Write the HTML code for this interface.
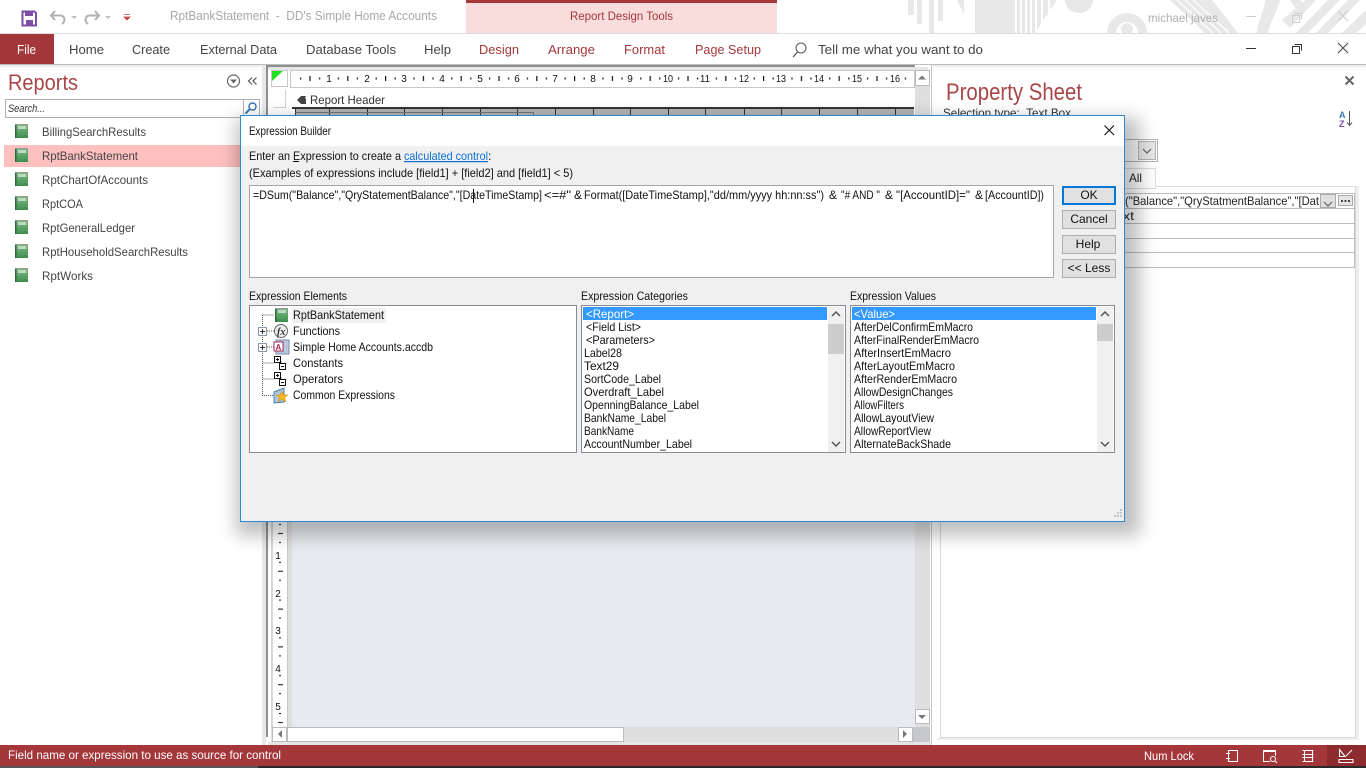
<!DOCTYPE html>
<html><head><meta charset="utf-8"><title>Expression Builder</title>
<style>
html,body{margin:0;padding:0;background:#fff;width:1366px;height:768px;overflow:hidden}
svg{display:block}
text{font-family:"Liberation Sans",sans-serif;white-space:pre}
.s11{font-size:12px;fill:#111}
.nav{font-size:12px;fill:#444}
.rib{font-size:13px;fill:#444}
.red{font-size:13px;fill:#a4373a}
.rul{font-size:10px;fill:#111}
</style></head><body>
<svg width="1366" height="768" viewBox="0 0 1366 768" xmlns="http://www.w3.org/2000/svg">
<defs>
<filter id="bl" x="-20%" y="-20%" width="140%" height="140%"><feGaussianBlur stdDeviation="9"/></filter>
<clipPath id="top"><rect x="900" y="0" width="466" height="33"/></clipPath>
<linearGradient id="gr" x1="0" y1="0" x2="0" y2="1"><stop offset="0" stop-color="#7fbd86"/><stop offset="1" stop-color="#3f8c4f"/></linearGradient>
<pattern id="rh" x="291" y="70" width="37.8" height="17" patternUnits="userSpaceOnUse"><rect x="9" y="7.5" width="1.2" height="2" fill="#111"/><rect x="18.4" y="6" width="1.2" height="5" fill="#111"/><rect x="28" y="7.5" width="1.2" height="2" fill="#111"/></pattern>
<pattern id="rv" x="273" y="517" width="15" height="37.8" patternUnits="userSpaceOnUse"><rect x="6" y="7" width="2" height="1" fill="#111"/><rect x="5" y="16" width="5" height="1" fill="#111"/><rect x="6" y="25" width="2" height="1" fill="#111"/></pattern>
<g id="rep"><rect x="0" y="0" width="13" height="14" fill="url(#gr)"/><rect x="0" y="0" width="1.500" height="14" fill="#2f6b3a"/><rect x="3" y="2" width="8" height="3" fill="#bcd9bf"/><rect x="0" y="0" width="13" height="1" fill="#9a9a9a"/></g>
<g id="pm"><rect x=".5" y=".5" width="6" height="6" fill="#fff" stroke="#111"/><path d="M2 3.500H5M3.500 2V5" stroke="#111"/><rect x="5.500" y="7.500" width="6" height="6" fill="#fff" stroke="#111"/><path d="M7 10.500H10" stroke="#111"/><path d="M6.500 5V8" stroke="#111" stroke-width="1.500"/></g>
<g id="pb"><rect x=".5" y=".5" width="8" height="8" fill="#fff" stroke="#8a9bb0"/><path d="M2 4.500H7M4.500 2V7" stroke="#333"/></g>
</defs>

<!-- top bar pattern -->
<g fill="#e8e8e8" clip-path="url(#top)">
<rect x="908" y="0" width="6" height="15"/><rect x="917" y="0" width="5" height="24"/><rect x="929" y="0" width="5" height="33"/><rect x="938" y="0" width="5" height="21"/>
<path d="M957 0H964V14Z"/>
<rect x="975" y="0" width="40" height="33"/>
<path d="M1017 0V33H1020V0ZM1022 0V33H1025V0ZM1027 0V33H1030V0ZM1032 0V33H1035V0ZM1037 0V30L1041 24V0ZM1043 0V20L1048 14V0ZM1050 0V10L1056 2V0Z"/>
<path d="M1065 0A14 13 0 0 0 1093 0Z"/>
<path d="M1107 33A20 20 0 1 1 1147 33H1138A11 11 0 1 0 1116 33Z"/>
<circle cx="1127" cy="29" r="6"/>
<path d="M1170 0H1176L1212 33H1205ZM1178 0H1184L1220 33H1214ZM1186 0H1192L1228 33H1222ZM1194 0H1212L1238 33H1230Z"/>
<path d="M1265 0H1280C1277 12 1270 22 1268 33H1257C1258 20 1264 12 1265 0Z"/>
<path d="M1290 0H1300L1306 6L1298 12ZM1306 0H1316L1290 28L1282 20ZM1328 0H1340L1308 33H1296ZM1348 0H1360L1328 33H1316ZM1366 10V24L1356 33H1342Z"/>
</g>
<rect x="0" y="33" width="1366" height="1" fill="#dcdcdc"/>

<!-- QAT -->
<path d="M22.500 11.500H34.500L36 13V25.500H22.500Z" fill="#fff" stroke="#7c4da4" stroke-width="2"/>
<rect x="25" y="11" width="8" height="5" fill="#7c4da4"/><rect x="26" y="20" width="7" height="5" fill="#7c4da4"/>
<path d="M55 11L51 15.500L55 20M52 15.500H60C65 15.500 66 21 62 24" fill="none" stroke="#b0b0b0" stroke-width="2"/>
<path d="M71 16l3 3 3-3z" fill="#c0c0c0"/>
<path d="M95 11L99 15.500L95 20M98 15.500H90C85 15.500 84 21 88 24" fill="none" stroke="#b0b0b0" stroke-width="2"/>
<path d="M105 16l3 3 3-3z" fill="#c0c0c0"/>
<path d="M124 14.500H130M124 17l3 3 3-3z" stroke="#c8464a" fill="#c8464a" stroke-width=".8"/>
<text x="170" y="20" font-size="13" fill="#a8a8a8" textLength="267" lengthAdjust="spacingAndGlyphs">RptBankStatement  -  DD's Simple Home Accounts</text>

<rect x="466" y="0" width="311" height="33" fill="#f9dddd"/><rect x="466" y="0" width="311" height="3" fill="#a4373a"/>
<text x="570" y="20" font-size="12" fill="#a4373a" textLength="103" lengthAdjust="spacingAndGlyphs">Report Design Tools</text>
<text x="1148" y="22" font-size="12" fill="#b0b0b0" textLength="70" lengthAdjust="spacingAndGlyphs">michael javes</text>
<rect x="1246" y="16" width="10" height="1" fill="#ccc"/>
<path d="M1294.500 13.500H1301.500V19.500M1292.500 15.500H1299.500V22.500H1292.500Z" fill="none" stroke="#ccc"/>
<path d="M1338 11L1348 21M1348 11L1338 21" stroke="#ccc"/>

<!-- Ribbon tabs -->
<rect x="0" y="34" width="54" height="30" fill="#a4373a"/>
<text x="17" y="54" font-size="13" fill="#fff" textLength="19" lengthAdjust="spacingAndGlyphs">File</text>
<text x="69" y="54" class="rib" textLength="35" lengthAdjust="spacingAndGlyphs">Home</text>
<text x="132" y="54" class="rib" textLength="38" lengthAdjust="spacingAndGlyphs">Create</text>
<text x="200" y="54" class="rib" textLength="77" lengthAdjust="spacingAndGlyphs">External Data</text>
<text x="306" y="54" class="rib" textLength="90" lengthAdjust="spacingAndGlyphs">Database Tools</text>
<text x="424" y="54" class="rib" textLength="27" lengthAdjust="spacingAndGlyphs">Help</text>
<text x="479" y="54" class="red" textLength="40" lengthAdjust="spacingAndGlyphs">Design</text>
<text x="548" y="54" class="red" textLength="47" lengthAdjust="spacingAndGlyphs">Arrange</text>
<text x="624" y="54" class="red" textLength="41" lengthAdjust="spacingAndGlyphs">Format</text>
<text x="695" y="54" class="red" textLength="66" lengthAdjust="spacingAndGlyphs">Page Setup</text>
<circle cx="801" cy="48" r="5" fill="none" stroke="#555"/><path d="M797.500 52L793 57" stroke="#555" stroke-width="1.300"/>
<text x="818" y="54" class="rib" textLength="165" lengthAdjust="spacingAndGlyphs">Tell me what you want to do</text>
<rect x="1246" y="48" width="10" height="1" fill="#333"/>
<path d="M1294.500 44.500H1301.500V50.500M1292.500 46.500H1299.500V53.500H1292.500Z" fill="#fff" stroke="#333"/>
<path d="M1338 43L1348 53M1348 43L1338 53" stroke="#444"/>
<rect x="0" y="64" width="1366" height="1" fill="#bdbdbd"/><rect x="0" y="65" width="1366" height="2" fill="#ededed"/>

<!-- Nav pane -->
<text x="8" y="90" font-size="22" fill="#a9464a" textLength="70" lengthAdjust="spacingAndGlyphs">Reports</text>
<circle cx="233.500" cy="81" r="6" fill="#fff" stroke="#666" stroke-width="1.200"/><path d="M230 79.500h7l-3.500 4z" fill="#666"/>
<path d="M252 77.500L248.500 81L252 84.500M256.500 77.500L253 81L256.500 84.500" fill="none" stroke="#555" stroke-width="1.200"/>
<rect x="5.500" y="99.500" width="254" height="18" fill="#fff" stroke="#b0b0b0"/>
<rect x="243" y="100" width="1" height="17" fill="#b0b0b0"/>
<text x="8" y="112" font-size="11" font-style="italic" fill="#333" textLength="37" lengthAdjust="spacingAndGlyphs">Search...</text>
<circle cx="252.500" cy="106.500" r="3.500" fill="none" stroke="#3b78b5" stroke-width="1.500"/><path d="M250 109L245.500 113.500" stroke="#3b78b5" stroke-width="2"/>
<rect x="4" y="145" width="262" height="22" fill="#ffc0c0"/>
<use href="#rep" x="15" y="124"/><use href="#rep" x="15" y="148"/><use href="#rep" x="15" y="172"/><use href="#rep" x="15" y="196"/><use href="#rep" x="15" y="220"/><use href="#rep" x="15" y="244"/><use href="#rep" x="15" y="268"/>
<text x="42" y="136" class="nav" textLength="104" lengthAdjust="spacingAndGlyphs">BillingSearchResults</text>
<text x="42" y="160" class="nav" textLength="96" lengthAdjust="spacingAndGlyphs">RptBankStatement</text>
<text x="42" y="184" class="nav" textLength="106" lengthAdjust="spacingAndGlyphs">RptChartOfAccounts</text>
<text x="42" y="208" class="nav" textLength="41" lengthAdjust="spacingAndGlyphs">RptCOA</text>
<text x="42" y="232" class="nav" textLength="93" lengthAdjust="spacingAndGlyphs">RptGeneralLedger</text>
<text x="42" y="256" class="nav" textLength="146" lengthAdjust="spacingAndGlyphs">RptHouseholdSearchResults</text>
<text x="42" y="280" class="nav" textLength="51" lengthAdjust="spacingAndGlyphs">RptWorks</text>

<!-- Design surface -->
<rect x="262" y="65" width="4" height="680" fill="#e8e8e8"/>
<rect x="266" y="65" width="667" height="680" fill="#fff"/>
<rect x="266" y="65" width="649" height="2" fill="#8f8f8f"/>
<rect x="266" y="65" width="2" height="672" fill="#8f8f8f"/>
<rect x="268" y="67" width="660" height="3" fill="#e6e6e6"/>
<rect x="271.500" y="70.500" width="16" height="16" fill="#fff" stroke="#c8c8c8"/>
<path d="M272 71H283L272 81Z" fill="#22e022"/>
<rect x="290.500" y="70.500" width="624" height="17" fill="#fff" stroke="#c8c8c8"/>
<rect x="291" y="71" width="623" height="16" fill="url(#rh)"/>
<g text-anchor="middle">
<rect x="323" y="72" width="12" height="13" fill="#fff"/><rect x="361" y="72" width="12" height="13" fill="none"/>
<text x="329" y="82" class="rul">1</text><text x="367" y="82" class="rul">2</text><text x="404" y="82" class="rul">3</text><text x="442" y="82" class="rul">4</text><text x="480" y="82" class="rul">5</text><text x="517" y="82" class="rul">6</text><text x="555" y="82" class="rul">7</text><text x="593" y="82" class="rul">8</text><text x="630" y="82" class="rul">9</text><text x="668" y="82" class="rul" textLength="10" lengthAdjust="spacingAndGlyphs">10</text><text x="705" y="82" class="rul" textLength="10" lengthAdjust="spacingAndGlyphs">11</text><text x="744" y="82" class="rul" textLength="10" lengthAdjust="spacingAndGlyphs">12</text><text x="781" y="82" class="rul" textLength="10" lengthAdjust="spacingAndGlyphs">13</text><text x="819" y="82" class="rul" textLength="10" lengthAdjust="spacingAndGlyphs">14</text><text x="857" y="82" class="rul" textLength="10" lengthAdjust="spacingAndGlyphs">15</text><text x="895" y="82" class="rul" textLength="10" lengthAdjust="spacingAndGlyphs">16</text>
</g>
<path d="M273.500 107.500H285.500V90" fill="none" stroke="#d0d0d0"/>
<path d="M297 100L301 96H306L305 98L306 99V104H301Z" fill="#444"/>
<text x="310" y="104" font-size="12" fill="#333" textLength="75" lengthAdjust="spacingAndGlyphs">Report Header</text>
<rect x="292" y="107" width="622" height="2" fill="#333"/>
<rect x="295" y="109" width="619" height="8" fill="#b4b4b4"/>
<path d="M295.500 109V117M329.500 109V117M367.500 109V117M404.500 109V117M442.500 109V117M480.500 109V117M517.500 109V117M555.500 109V117M593.500 109V117M630.500 109V117M668.500 109V117M705.500 109V117M744.500 109V117M781.500 109V117M819.500 109V117M857.500 109V117M895.500 109V117" stroke="#333"/>
<path d="M295.500 112.500H533.500V117" fill="none" stroke="#777"/>

<rect x="292" y="118" width="623" height="610" fill="#e7eaee"/>
<rect x="288" y="118" width="4" height="610" fill="#dedede"/>
<rect x="273" y="118" width="15" height="610" fill="#fff"/>
<rect x="271" y="118" width="2" height="610" fill="#d8d8d8"/>
<rect x="287" y="118" width="1" height="610" fill="#c8c8c8"/>
<rect x="273" y="517" width="15" height="208" fill="url(#rv)"/>
<text x="278" y="559" class="rul" text-anchor="middle">1</text><text x="278" y="597" class="rul" text-anchor="middle">2</text><text x="278" y="634" class="rul" text-anchor="middle">3</text><text x="278" y="672" class="rul" text-anchor="middle">4</text><text x="278" y="710" class="rul" text-anchor="middle">5</text>

<!-- v scroll -->
<rect x="915" y="70" width="15" height="657" fill="#dfdfdf"/>
<rect x="915.500" y="70.500" width="14" height="15" fill="#fff" stroke="#bbb"/>
<path d="M918 79.500h8l-4-4z" fill="#777"/>
<rect x="915.500" y="709.500" width="14" height="14" fill="#fff" stroke="#bbb"/>
<path d="M918 715h8l-4 4z" fill="#777"/>
<!-- h scroll -->
<rect x="271" y="727" width="642" height="15" fill="#dfdfdf"/>
<rect x="272.500" y="727.500" width="14" height="14" fill="#fff" stroke="#bbb"/>
<path d="M282 730v8l-4-4z" fill="#777"/>
<rect x="287.500" y="727.500" width="336" height="14" fill="#fff" stroke="#bbb"/>
<rect x="898.500" y="727.500" width="14" height="14" fill="#fff" stroke="#bbb"/>
<path d="M903 730v8l4-4z" fill="#777"/>
<rect x="913" y="727" width="17" height="16" fill="#c6c8cc"/>
<rect x="268" y="742" width="664" height="3" fill="#e6e6e6"/>
<rect x="931" y="65" width="1" height="680" fill="#c8c8c8"/>

<!-- property sheet -->
<text x="946" y="100" font-size="24" fill="#a9464a" textLength="136" lengthAdjust="spacingAndGlyphs">Property Sheet</text>
<text x="943" y="117" font-size="12" fill="#333" textLength="128" lengthAdjust="spacingAndGlyphs">Selection type:  Text Box</text>
<path d="M1345.500 76.500L1353.500 84.500M1353.500 76.500L1345.500 84.500" stroke="#666" stroke-width="2"/>
<text x="1339" y="118" font-size="9" font-weight="bold" fill="#3b78b5">A</text>
<text x="1339" y="127" font-size="9" font-weight="bold" fill="#7c4da4">Z</text>
<path d="M1349.500 111V125M1347 122.500L1349.500 125.500L1352 122.500" fill="none" stroke="#555"/>
<rect x="1120" y="139.500" width="37.500" height="22" fill="#fff" stroke="#b4b4b4"/>
<rect x="1138.500" y="141.500" width="17" height="18" fill="#e6e6e6" stroke="#b4b4b4"/>
<path d="M1143 149L1147 153L1151 149" fill="none" stroke="#555"/>
<rect x="1120" y="168.500" width="35.500" height="20" fill="#fff" stroke="#ddd"/>
<text x="1129" y="182" font-size="12" fill="#222" textLength="13" lengthAdjust="spacingAndGlyphs">All</text>
<path d="M941 186.500H1120M1155.500 186.500H1355.500" stroke="#ddd"/>
<rect x="940" y="186" width="1" height="552" fill="#d8d8d8"/><rect x="1355" y="186" width="1" height="552" fill="#d8d8d8"/><rect x="940" y="737" width="416" height="1" fill="#d8d8d8"/>
<rect x="1356" y="186" width="3" height="552" fill="#eee"/><rect x="937" y="738" width="422" height="2" fill="#eee"/>
<path d="M1120 193.500H1354.500V267.500H1120M1120 208.500H1354.500M1120 223.500H1354.500M1120 238.500H1354.500M1120 252.500H1354.500" fill="none" stroke="#bdbdbd"/>
<text x="1125" y="205" font-size="12" fill="#222" textLength="194" lengthAdjust="spacingAndGlyphs">("Balance","QryStatmentBalance","[Dat</text>
<rect x="1320.500" y="194.500" width="15" height="13" fill="#e0e0e0" stroke="#aaa"/><path d="M1324 202L1328 206L1332 202" fill="none" stroke="#555"/>
<rect x="1338.500" y="195.500" width="14" height="10" fill="#e6e6e6" stroke="#aaa"/><path d="M1341 201h2m1.500 0h2m1.500 0h2" stroke="#111" stroke-width="1.500"/>
<text x="1123" y="220" font-size="12" fill="#222" textLength="11" lengthAdjust="spacingAndGlyphs">xt</text>

<!-- status -->
<rect x="0" y="745" width="1366" height="21" fill="#a4373a"/>
<rect x="0" y="766" width="258" height="2" fill="#555"/><rect x="258" y="766" width="1108" height="2" fill="#2a2a2a"/>
<text x="8" y="759" font-size="12" fill="#fff" textLength="273" lengthAdjust="spacingAndGlyphs">Field name or expression to use as source for control</text>
<text x="1144" y="760" font-size="12" fill="#fff" textLength="50" lengthAdjust="spacingAndGlyphs">Num Lock</text>
<path d="M1228.500 750.500H1237.500V761.500H1228.500ZM1226 753.500H1230M1226 758.500H1230" fill="none" stroke="#fff"/>
<path d="M1263.500 750.500H1275.500V756M1263.500 750.500V761.500H1270" fill="none" stroke="#fff"/><rect x="1263" y="750" width="13" height="2" fill="#fff"/><circle cx="1273" cy="759" r="2.500" fill="none" stroke="#fff"/><path d="M1275 761L1277 763" stroke="#fff"/>
<path d="M1302.500 750.500H1313.500M1302.500 761.500H1313.500M1304.500 750.500V761.500M1312.500 750.500V761.500M1302.500 754.500H1313.500M1302.500 757.500H1313.500" fill="none" stroke="#fff"/>
<rect x="1327" y="745" width="39" height="21" fill="#8e2b2e"/>
<path d="M1339.500 749.500V756.500H1345ZM1339 762.500V759.500H1353V762.500ZM1346 756L1352 750" fill="none" stroke="#fff" stroke-width="1.100"/>

<!-- dialog shadow -->
<rect x="236" y="118" width="904" height="418" fill="#000" opacity=".25" filter="url(#bl)"/>
<!-- dialog -->
<rect x="240.500" y="115.500" width="884" height="406" fill="#f0f0f0" stroke="#2b8ad0"/>
<rect x="241" y="116" width="883" height="30" fill="#fff"/>
<text x="249" y="135" class="s11" textLength="82" lengthAdjust="spacingAndGlyphs">Expression Builder</text>
<path d="M1104.500 125.500L1114 135M1114 125.500L1104.500 135" stroke="#111" stroke-width="1.100"/>
<text x="249" y="160" class="s11" textLength="152" lengthAdjust="spacingAndGlyphs">Enter an Expression to create a</text>
<rect x="293" y="161" width="6" height="1" fill="#111"/>
<text x="404" y="160" class="s11" style="fill:#0a6ed8" text-decoration="underline" textLength="84" lengthAdjust="spacingAndGlyphs">calculated control</text>
<text x="488" y="160" class="s11">:</text>
<text x="249" y="177" class="s11" textLength="324" lengthAdjust="spacingAndGlyphs">(Examples of expressions include [field1] + [field2] and [field1] &lt; 5)</text>
<rect x="249.500" y="185.500" width="804" height="92" fill="#fff" stroke="#a6a6a6"/>
<text x="253" y="199" class="s11" textLength="289" lengthAdjust="spacingAndGlyphs">=DSum("Balance","QryStatementBalance","[DateTimeStamp]</text>
<text x="544" y="199" class="s11" textLength="27" lengthAdjust="spacingAndGlyphs">&lt;=#"</text>
<text x="574" y="199" class="s11">&amp;</text>
<text x="584" y="199" class="s11" textLength="240" lengthAdjust="spacingAndGlyphs">Format([DateTimeStamp],"dd/mm/yyyy hh:nn:ss")</text>
<text x="829" y="199" class="s11">&amp;</text>
<text x="841" y="199" class="s11" textLength="39" lengthAdjust="spacingAndGlyphs">"# AND "</text>
<text x="885" y="199" class="s11">&amp;</text>
<text x="896" y="199" class="s11" textLength="74" lengthAdjust="spacingAndGlyphs">"[AccountID]="</text>
<text x="975" y="199" class="s11">&amp;</text>
<text x="985" y="199" class="s11" textLength="59" lengthAdjust="spacingAndGlyphs">[AccountID])</text>
<rect x="473" y="189" width="1" height="14" fill="#111"/>
<!-- buttons -->
<rect x="1063" y="187" width="52" height="17" fill="#e1e1e1" stroke="#0078d7" stroke-width="2"/>
<rect x="1062.500" y="210.500" width="53" height="18" fill="#e1e1e1" stroke="#adadad"/>
<rect x="1062.500" y="235.500" width="53" height="18" fill="#e1e1e1" stroke="#adadad"/>
<rect x="1062.500" y="259.500" width="53" height="18" fill="#e1e1e1" stroke="#adadad"/>
<text x="1089" y="199" class="s11" text-anchor="middle">OK</text>
<text x="1089" y="223" class="s11" text-anchor="middle">Cancel</text>
<text x="1088" y="248" class="s11" text-anchor="middle">Help</text>
<text x="1089" y="272" class="s11" text-anchor="middle">&lt;&lt; Less</text>
<!-- list labels -->
<text x="249" y="300" class="s11" textLength="98" lengthAdjust="spacingAndGlyphs">Expression Elements</text>
<text x="581" y="300" class="s11" textLength="107" lengthAdjust="spacingAndGlyphs">Expression Categories</text>
<text x="850" y="300" class="s11" textLength="86" lengthAdjust="spacingAndGlyphs">Expression Values</text>
<!-- elements -->
<rect x="249.500" y="305.500" width="327" height="147" fill="#fff" stroke="#858b93"/>
<rect x="292" y="308" width="94" height="15" fill="#f0f0f0"/>
<path d="M262.500 315V395.500H274M262.500 315H274M267 331H274M267 347H274M262.500 363H274M262.500 379H274" fill="none" stroke="#555" stroke-dasharray="1 1"/>
<use href="#rep" x="275" y="308"/>
<use href="#pb" x="258" y="327"/><use href="#pb" x="258" y="343"/>
<circle cx="281" cy="331" r="6.500" fill="#eee" stroke="#666"/><text x="277" y="335" font-size="10" font-style="italic" font-weight="bold" fill="#333" style="font-family:'Liberation Serif',serif">fx</text>
<rect x="276" y="340" width="13" height="14" fill="#b9c6dc" stroke="#7d8fb0"/><rect x="274" y="342" width="9" height="9" fill="#fff" stroke="#a4275a"/><text x="275.500" y="350" font-size="8" font-weight="bold" fill="#a4275a">A</text>
<use href="#pm" x="274" y="356"/><use href="#pm" x="274" y="372"/>
<path d="M274 392L284 388V402L274 403Z" fill="#a9c8e0" stroke="#4a7fa8"/>
<path d="M282 391L283.800 395H288L284.600 397.600L286 402L282 399.400L278 402L279.400 397.600L276 395H280.200Z" fill="#f5b51f" stroke="#c98a10" stroke-width=".5"/>
<text x="293" y="319" class="s11" textLength="91" lengthAdjust="spacingAndGlyphs">RptBankStatement</text>
<text x="293" y="335" class="s11" textLength="47" lengthAdjust="spacingAndGlyphs">Functions</text>
<text x="293" y="351" class="s11" textLength="140" lengthAdjust="spacingAndGlyphs">Simple Home Accounts.accdb</text>
<text x="293" y="367" class="s11" textLength="50" lengthAdjust="spacingAndGlyphs">Constants</text>
<text x="293" y="383" class="s11" textLength="50" lengthAdjust="spacingAndGlyphs">Operators</text>
<text x="293" y="399" class="s11" textLength="102" lengthAdjust="spacingAndGlyphs">Common Expressions</text>
<!-- categories -->
<rect x="581.500" y="305.500" width="264" height="147" fill="#fff" stroke="#858b93"/>
<rect x="583" y="307" width="244" height="13" fill="#3399ff"/>
<rect x="828" y="307" width="16" height="145" fill="#f0f0f0"/><rect x="828" y="324" width="16" height="30" fill="#cdcdcd"/>
<path d="M832 316L836 312L840 316M832 442L836 446L840 442" fill="none" stroke="#555" stroke-width="1.500"/>
<text x="586" y="318" class="s11" style="fill:#fff" textLength="48" lengthAdjust="spacingAndGlyphs">&lt;Report&gt;</text>
<text x="586" y="331" class="s11" textLength="55" lengthAdjust="spacingAndGlyphs">&lt;Field List&gt;</text>
<text x="586" y="344" class="s11" textLength="69" lengthAdjust="spacingAndGlyphs">&lt;Parameters&gt;</text>
<text x="584" y="357" class="s11" textLength="38" lengthAdjust="spacingAndGlyphs">Label28</text>
<text x="584" y="370" class="s11" textLength="35" lengthAdjust="spacingAndGlyphs">Text29</text>
<text x="584" y="383" class="s11" textLength="77" lengthAdjust="spacingAndGlyphs">SortCode_Label</text>
<text x="584" y="396" class="s11" textLength="80" lengthAdjust="spacingAndGlyphs">Overdraft_Label</text>
<text x="584" y="409" class="s11" textLength="115" lengthAdjust="spacingAndGlyphs">OpenningBalance_Label</text>
<text x="584" y="422" class="s11" textLength="82" lengthAdjust="spacingAndGlyphs">BankName_Label</text>
<text x="584" y="435" class="s11" textLength="50" lengthAdjust="spacingAndGlyphs">BankName</text>
<text x="584" y="448" class="s11" textLength="108" lengthAdjust="spacingAndGlyphs">AccountNumber_Label</text>
<!-- values -->
<rect x="850.500" y="305.500" width="264" height="147" fill="#fff" stroke="#858b93"/>
<rect x="852" y="307" width="244" height="13" fill="#3399ff"/>
<rect x="1097" y="307" width="16" height="145" fill="#f0f0f0"/><rect x="1097" y="324" width="16" height="17" fill="#cdcdcd"/>
<path d="M1101 316L1105 312L1109 316M1101 442L1105 446L1109 442" fill="none" stroke="#555" stroke-width="1.500"/>
<text x="854" y="318" class="s11" style="fill:#fff" textLength="41" lengthAdjust="spacingAndGlyphs">&lt;Value&gt;</text>
<text x="854" y="331" class="s11" textLength="119" lengthAdjust="spacingAndGlyphs">AfterDelConfirmEmMacro</text>
<text x="854" y="344" class="s11" textLength="125" lengthAdjust="spacingAndGlyphs">AfterFinalRenderEmMacro</text>
<text x="854" y="357" class="s11" textLength="97" lengthAdjust="spacingAndGlyphs">AfterInsertEmMacro</text>
<text x="854" y="370" class="s11" textLength="101" lengthAdjust="spacingAndGlyphs">AfterLayoutEmMacro</text>
<text x="854" y="383" class="s11" textLength="103" lengthAdjust="spacingAndGlyphs">AfterRenderEmMacro</text>
<text x="854" y="396" class="s11" textLength="99" lengthAdjust="spacingAndGlyphs">AllowDesignChanges</text>
<text x="854" y="409" class="s11" textLength="50" lengthAdjust="spacingAndGlyphs">AllowFilters</text>
<text x="854" y="422" class="s11" textLength="80" lengthAdjust="spacingAndGlyphs">AllowLayoutView</text>
<text x="854" y="435" class="s11" textLength="77" lengthAdjust="spacingAndGlyphs">AllowReportView</text>
<text x="854" y="448" class="s11" textLength="97" lengthAdjust="spacingAndGlyphs">AlternateBackShade</text>
<!-- grip -->
<path d="M1120.500 510h1M1117.500 513h1M1120.500 513h1M1114.500 516h1M1117.500 516h1M1120.500 516h1" stroke="#999" stroke-width="2"/>
</svg>
</body></html>
